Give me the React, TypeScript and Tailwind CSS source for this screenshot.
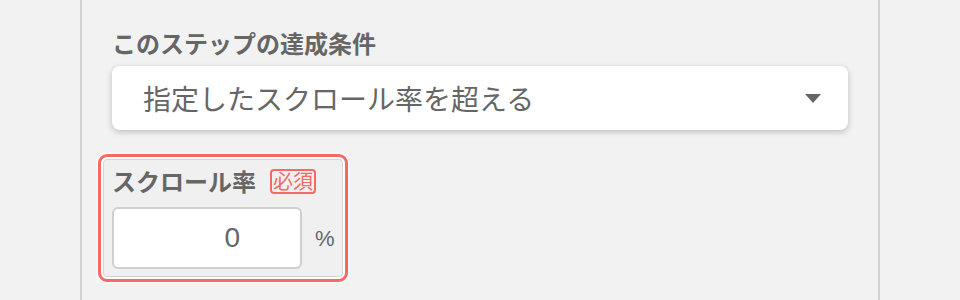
import React from "react";

const font = { fontFamily: '"Noto Sans CJK JP", "Noto Sans", sans-serif' };

const StepCondition: React.FC = () => {
  return (
    <div className="pt-[25px]">
      <div className="h-[36px] leading-[36px] text-[24px] font-bold text-[#666]">
        このステップの達成条件
      </div>

      {/* Select */}
      <div className="mt-[5px] h-[64px] rounded-[8px] bg-white shadow-[0_2px_6px_rgba(0,0,0,0.22)] flex items-center justify-between pl-[31px] pr-[27px]">
        <span className="text-[28px] text-[#666] leading-none">指定したスクロール率を超える</span>
        <svg width="16" height="9" viewBox="0 0 16 9">
          <path d="M0 0H16L8 9Z" fill="#666" />
        </svg>
      </div>

      {/* Scroll rate field (error outline) */}
      <div className="mt-[24px] -ml-[14px] w-[250px] rounded-[9px] border-[3px] border-[#f36b64] bg-white p-[2px] shadow-[0_0_2px_1px_rgba(255,255,255,0.9)]">
        <div className="rounded-[4px] border border-[#d6d6d6] bg-[#f0f0f0] pl-[8px] pt-[5px] pb-[7px]">
          <div className="h-[32px] flex items-center">
            <span className="text-[24px] font-bold text-[#666] leading-none">スクロール率</span>
            <span className="ml-[14px] h-[25px] px-[1px] flex items-center rounded-[4px] border-2 border-[#f36b64] text-[20px] leading-none text-[#f36b64]">
              必須
            </span>
          </div>
          <div className="mt-[10px] flex items-center">
            <div className="w-[190px] h-[62px] rounded-[6px] border-2 border-[#cfcfcf] bg-white flex items-center justify-end pr-[60px]">
              <span className="text-[28px] text-[#666] leading-none" style={{ fontFamily: '"Liberation Sans", sans-serif' }}>0</span>
            </div>
            <span className="ml-[13px] text-[22px] text-[#666]" style={{ fontFamily: '"Liberation Sans", sans-serif' }}>%</span>
          </div>
        </div>
      </div>
    </div>
  );
};

export default function App() {
  return (
    <div className="w-[960px] h-[300px] bg-[#f2f2f2] flex justify-center overflow-hidden" style={font}>
      <div className="w-[800px] h-full border-x-2 border-[#d2d2d2] px-[30px]">
        <StepCondition />
      </div>
    </div>
  );
}
